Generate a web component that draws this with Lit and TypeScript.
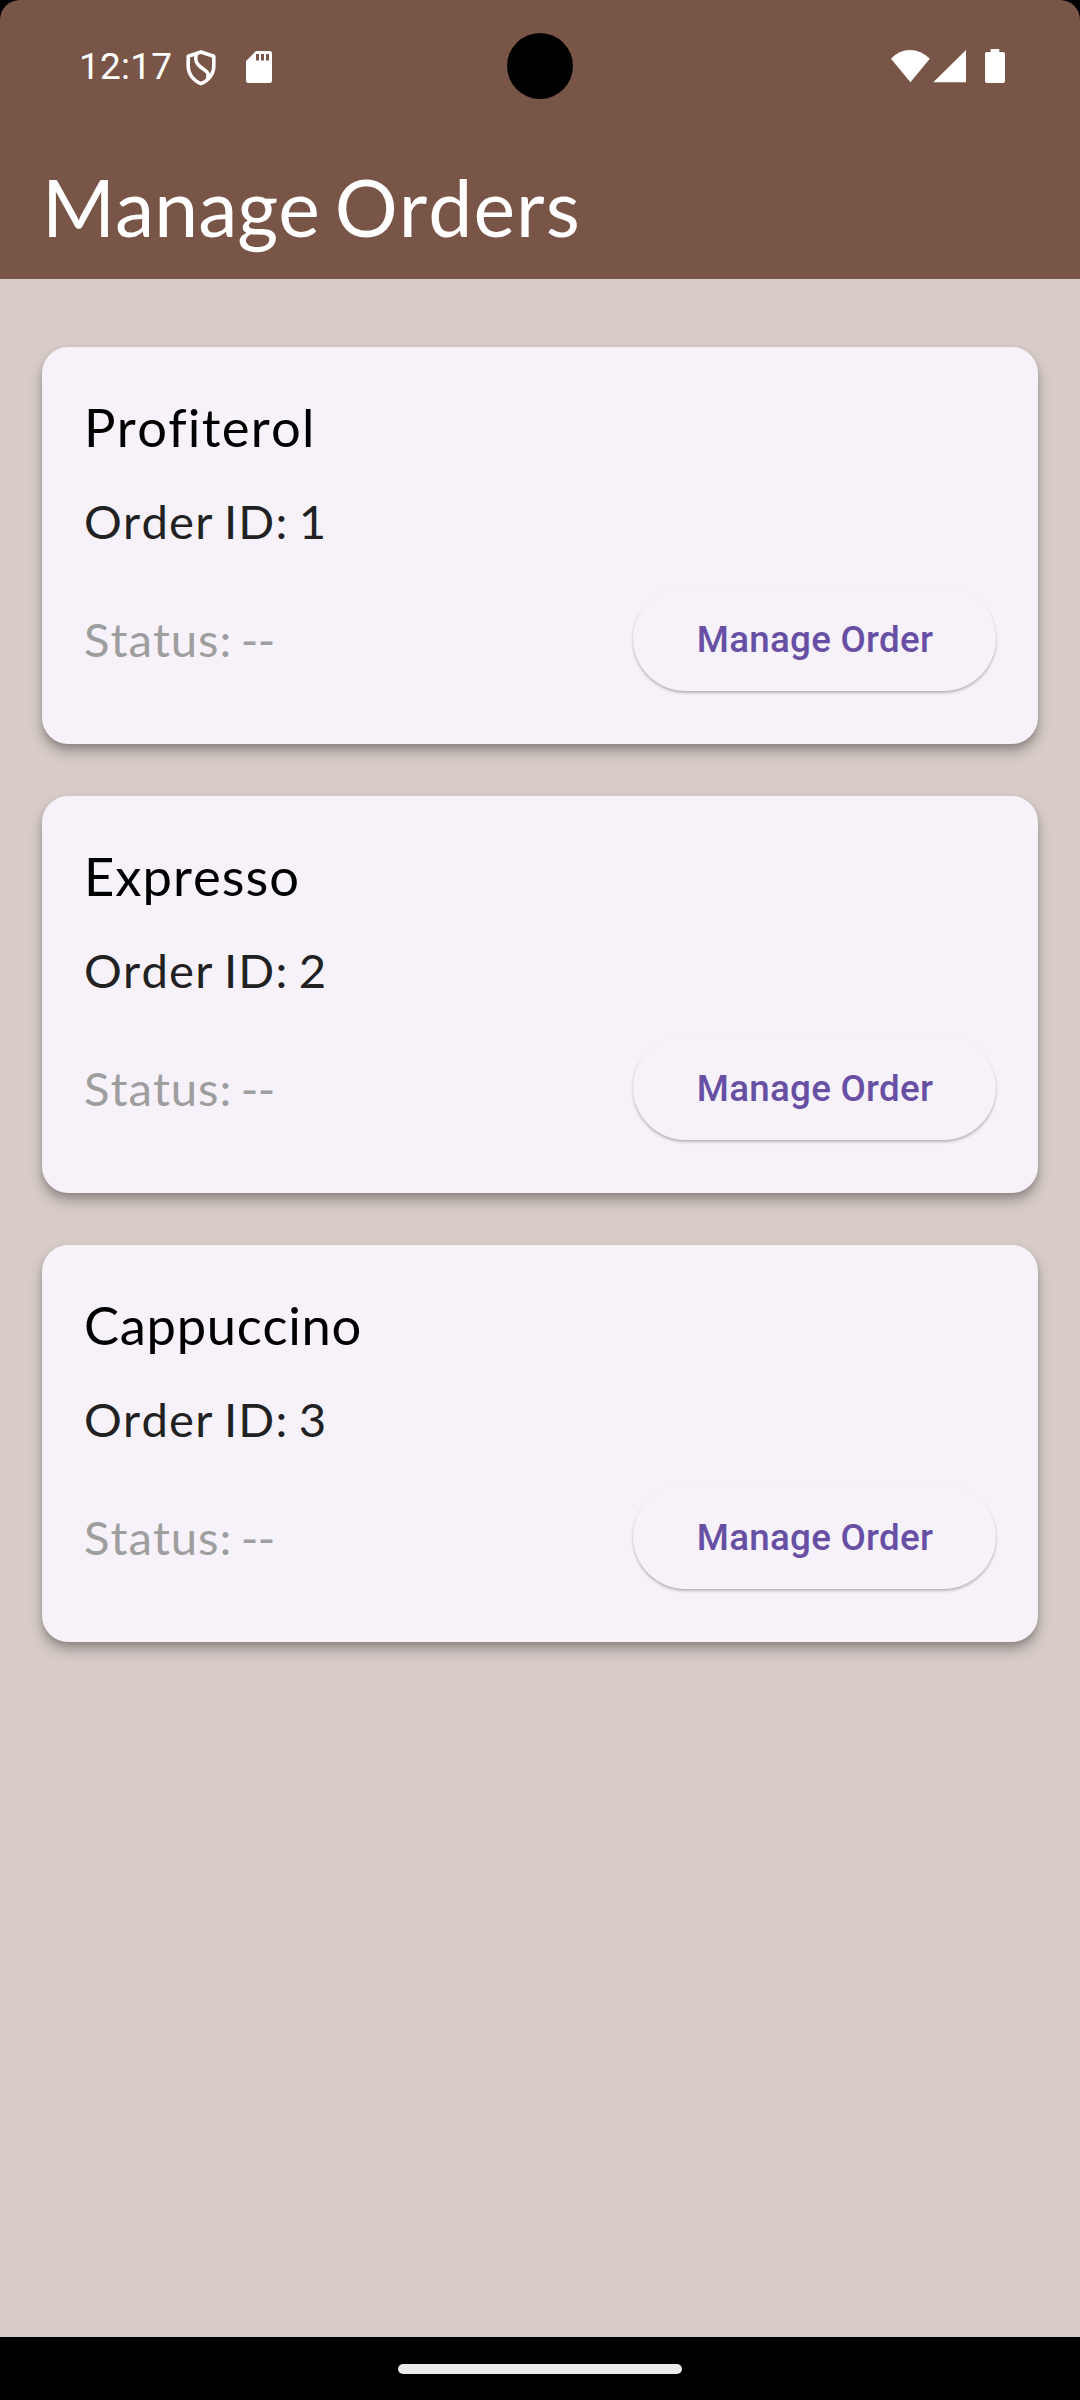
import { LitElement, html, css } from "lit";
import { customElement, property } from "lit/decorators.js";

interface Order {
  id: number;
  name: string;
  status: string;
  tracking: number;
}

const ORDERS: Order[] = [
  { id: 1, name: "Profiterol", status: "--", tracking: 1.25 },
  { id: 2, name: "Expresso", status: "--", tracking: 1.0 },
  { id: 3, name: "Cappuccino", status: "--", tracking: 0.7 },
];

@customElement("status-bar")
class StatusBar extends LitElement {
  static styles = css`
    :host {
      display: block;
      height: 132px;
    }
    .bar {
      display: flex;
      align-items: center;
      justify-content: space-between;
      height: 132px;
      box-sizing: border-box;
      padding: 0 75px 0 79px;
      position: relative;
      color: #fff;
    }
    .side {
      display: flex;
      align-items: center;
    }
    .time {
      margin-top: 2px;
      font: 400 37px/44px Roboto, "Liberation Sans", sans-serif;
      letter-spacing: 0.2px;
    }
    svg {
      display: block;
      fill: #fff;
    }
    .shield {
      margin: 3px 0 0 14px;
    }
    .sd {
      margin: 2px 0 0 30px;
    }
    .signal {
      margin-left: 3px;
    }
    .battery {
      margin-left: 19px;
    }
    .camera {
      position: absolute;
      left: 507px;
      top: 33px;
      width: 66px;
      height: 66px;
      border-radius: 50%;
      background: #000;
    }
  `;

  render() {
    return html`
      <div class="bar">
        <div class="side">
          <span class="time">12:17</span>
          <svg class="shield" width="30" height="36" viewBox="0 0 30 36">
            <g fill="none" stroke="#fff" stroke-width="3.6" stroke-linejoin="round">
              <path d="M15 2L27.8 6.3V16C27.8 24.5 22 31 15 33.6C8 31 2.2 24.5 2.2 16V6.3Z" />
              <path d="M10.3 4C9 9.500 9.500 13 14 16.500C19.500 20.800 24 22 21.500 28.500" />
            </g>
          </svg>
          <svg class="sd" width="26" height="32" viewBox="0 0 26 32">
            <path
              fill-rule="evenodd"
              d="M10 0H23.500Q26 0 26 2.500V29.500Q26 32 23.500 32H2.500Q0 32 0 29.500V10ZM10 3V9.500H13V3ZM15 3V9.500H18V3ZM20 3V9.500H23V3Z"
            />
          </svg>
        </div>
        <div class="side">
          <svg width="40" height="33" viewBox="0 0 40 33">
            <path d="M1 8.700Q9 0 20 0T39.800 8.700L20.400 32.200Z" />
          </svg>
          <svg class="signal" width="33" height="33" viewBox="0 0 33 33">
            <path d="M33 0V32.300H0.300Z" />
          </svg>
          <svg class="battery" width="20" height="34" viewBox="0 0 20 34">
            <path d="M5.700 0H14.300V3H18Q20 3 20 5V32Q20 34 18 34H2Q0 34 0 32V5Q0 3 2 3H5.700Z" />
          </svg>
        </div>
        <div class="camera"></div>
      </div>
    `;
  }
}

@customElement("order-card")
class OrderCard extends LitElement {
  @property({ attribute: false }) order!: Order;

  static styles = css`
    :host {
      display: block;
    }
    .card {
      box-sizing: border-box;
      height: 396.5px;
      padding: 48px 42px 0;
      border-radius: 26.25px;
      background: #f7f2fa;
      box-shadow: 0 8px 13px rgba(0, 0, 0, 0.28), 0 3px 5px rgba(0, 0, 0, 0.1);
      font-family: Lato, sans-serif;
      font-kerning: none;
      font-variant-ligatures: none;
    }
    .name {
      font-size: 52.5px;
      line-height: 64px;
      color: #000;
    }
    .id {
      margin-top: 33px;
      font-size: 47.25px;
      line-height: 57px;
      letter-spacing: 1.2px;
      word-spacing: -3px;
      color: #212121;
    }
    .row {
      display: flex;
      align-items: center;
      justify-content: space-between;
      margin-top: 36.5px;
    }
    .status {
      font-size: 47.25px;
      line-height: 57px;
      letter-spacing: 0.95px;
      word-spacing: -4.6px;
      color: #9e9e9e;
    }
    .value {
      letter-spacing: -0.4px;
    }
    .button {
      border: 0;
      height: 105px;
      width: 363px;
      padding: 3px 0 0 1px;
      border-radius: 52.5px;
      background: #f7f2fa;
      box-shadow: 0 2px 3px rgba(0, 0, 0, 0.24), 0 1px 2px rgba(0, 0, 0, 0.05);
      color: #6750a4;
      font: 500 36.75px/52px Roboto, sans-serif;
      letter-spacing: 0.2625px;
    }
  `;

  render() {
    const { id, name, status, tracking } = this.order;
    return html`
      <article class="card">
        <div class="name" style="letter-spacing:${tracking}px">${name}</div>
        <div class="id">Order ID: ${id}</div>
        <div class="row">
          <span class="status">Status: <span class="value">${status}</span></span>
          <button class="button">Manage Order</button>
        </div>
      </article>
    `;
  }
}

@customElement("app-root")
class AppRoot extends LitElement {
  static styles = css`
    :host {
      display: block;
      background: #000;
    }
    .screen {
      display: flex;
      flex-direction: column;
      width: 1080px;
      height: 2400px;
      overflow: hidden;
    }
    .header {
      height: 279px;
      background: #795548;
      border-radius: 20px 20px 0 0;
    }
    .title {
      margin: 0;
      padding: 28px 42px 0;
      font: 400 78.75px/94px Lato, sans-serif;
      font-kerning: none;
      word-spacing: -5.4px;
      color: #fff;
    }
    .wide {
      letter-spacing: 1px;
    }
    .list {
      flex: 1;
      display: flex;
      flex-direction: column;
      gap: 52.5px;
      padding: 68px 42px 0;
      background: #d7ccc8;
    }
    .nav {
      display: flex;
      align-items: center;
      justify-content: center;
      height: 63px;
    }
    .handle {
      width: 284px;
      height: 10px;
      border-radius: 5px;
      background: #ebebeb;
    }
  `;

  render() {
    return html`
      <div class="screen">
        <header class="header">
          <status-bar></status-bar>
          <h1 class="title">Manage <span class="wide">Orders</span></h1>
        </header>
        <main class="list">
          ${ORDERS.map((o) => html`<order-card .order=${o}></order-card>`)}
        </main>
        <div class="nav"><div class="handle"></div></div>
      </div>
    `;
  }
}
